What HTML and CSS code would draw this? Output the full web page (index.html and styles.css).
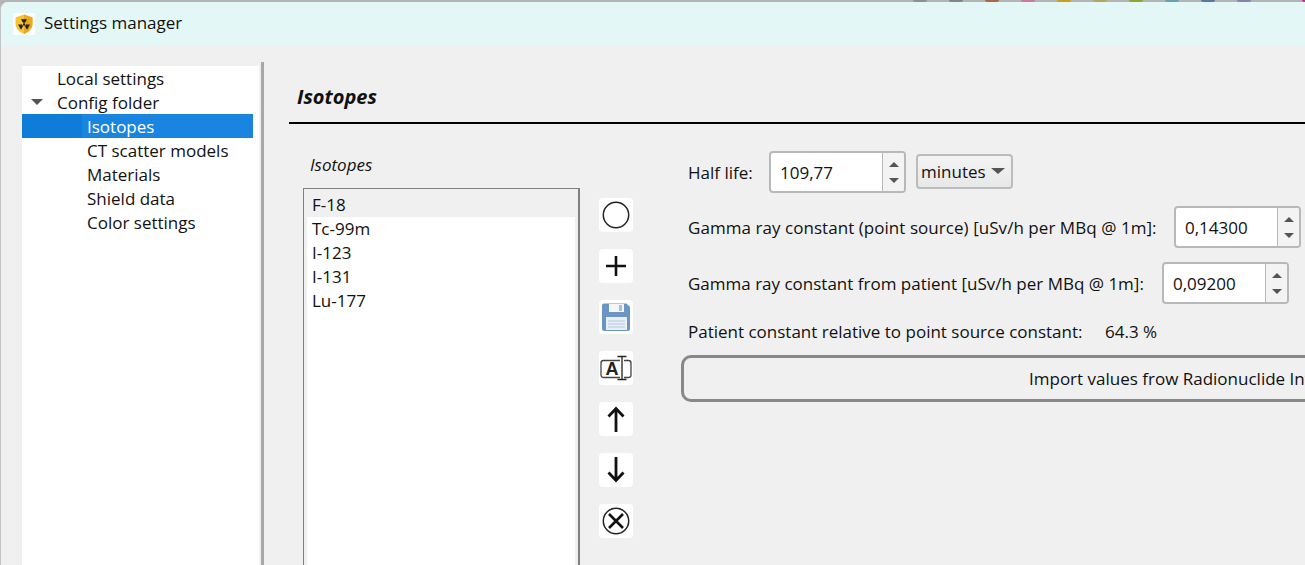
FILE: index.html
```html
<!DOCTYPE html>
<html>
<head>
  <title>Settings manager</title>
  <link rel="stylesheet" href="styles.css">
</head>
<body>
  <div class="desktop-strip">
    <span class="dot c1"></span><span class="dot c2"></span><span class="dot c3"></span><span class="dot c4"></span><span class="dot c5"></span><span class="dot c6"></span><span class="dot c7"></span><span class="dot c8"></span><span class="dot c9"></span><span class="dot c10"></span><span class="dot c11"></span>
  </div>
  <div class="window">
    <div class="titlebar">
      <span class="app-icon">
        <svg width="20" height="20" viewBox="0 0 20 20">
          <path d="M10 0.500 L18.500 3.500 V10 C18.500 14.500 14.500 18 10 20 C5.500 18 1.500 14.500 1.500 10 V3.500 Z" fill="#f7c435"/>
          <path d="M10 0.500 L18.500 3.500 V10 C18.500 14.500 14.500 18 10 20 Z" fill="#eaa925"/>
          <circle cx="10" cy="10.500" r="1.200" fill="#222"/>
          <path d="M9 8.770 L11 8.770 L13 5.300 L7 5.300 Z M8 10.500 L9 12.230 L7 15.700 L4 10.500 Z M12 10.500 L11 12.230 L13 15.700 L16 10.500 Z" fill="#222"/>
        </svg>
      </span>
      <span class="window-title">Settings manager</span>
    </div>

    <div class="content">
      <div class="tree-pane">
        <div class="tree">
          <div class="tree-row top-level">Local settings</div>
          <div class="tree-row top-level"><span class="tree-arrow"></span>Config folder</div>
          <div class="tree-row child selected"><span class="selected-text">Isotopes</span></div>
          <div class="tree-row child">CT scatter models</div>
          <div class="tree-row child">Materials</div>
          <div class="tree-row child">Shield data</div>
          <div class="tree-row child">Color settings</div>
        </div>
      </div>

      <div class="main">
        <h1 class="page-title">Isotopes</h1>

        <div class="columns">
          <div class="list-column">
            <div class="list-label">Isotopes</div>
            <div class="list">
              <div class="list-item current">F-18</div>
              <div class="list-rest">
                <div class="list-item">Tc-99m</div>
                <div class="list-item">I-123</div>
                <div class="list-item">I-131</div>
                <div class="list-item">Lu-177</div>
              </div>
            </div>
          </div>

          <div class="tools">
            <div class="tool">
              <svg width="28" height="28" viewBox="0 0 28 28"><circle cx="14" cy="14" r="12.700" fill="none" stroke="#222" stroke-width="1.500"/></svg>
            </div>
            <div class="tool">
              <svg width="28" height="28" viewBox="0 0 28 28"><path d="M14 4 V24 M4 14 H24" stroke="#111" stroke-width="2.600" fill="none"/></svg>
            </div>
            <div class="tool">
              <svg width="30" height="30" viewBox="0 0 30 30">
                <path d="M3 1.500 H25.500 L29 5 V26.500 Q29 29 26.500 29 H3.500 Q1 29 1 26.500 V3.500 Q1 1.500 3 1.500 Z" fill="#6b96c4"/>
                <rect x="8" y="2" width="15" height="8" fill="#f4f6f9"/>
                <rect x="18" y="3" width="3" height="6" fill="#a9c0da"/>
                <rect x="5" y="15" width="21" height="13" fill="#e9eff6"/>
                <path d="M7 19 H24 M7 22 H24 M7 25 H24" stroke="#b5c8de" stroke-width="1"/>
              </svg>
            </div>
            <div class="tool">
              <svg width="32" height="28" viewBox="0 0 32 28">
                <rect x="1" y="6.500" width="30" height="17" rx="2.500" fill="none" stroke="#444" stroke-width="1.300"/>
                <rect x="20" y="4" width="4" height="22" fill="#fff"/>
                <text x="12" y="21" class="icon-letter">A</text>
                <path d="M17.500 2.500 H26.500 M22 2.500 V25.500 M17.500 25.500 H26.500" stroke="#222" stroke-width="1.300" fill="none"/>
              </svg>
            </div>
            <div class="tool">
              <svg width="28" height="28" viewBox="0 0 28 28"><path d="M14 27 V3 M6.500 11.500 L14 3.500 L21.500 11.500" stroke="#111" stroke-width="2.800" fill="none"/></svg>
            </div>
            <div class="tool">
              <svg width="28" height="28" viewBox="0 0 28 28"><path d="M14 1 V25 M6.500 16.500 L14 24.500 L21.500 16.500" stroke="#111" stroke-width="2.800" fill="none"/></svg>
            </div>
            <div class="tool">
              <svg width="28" height="28" viewBox="0 0 28 28">
                <circle cx="14" cy="14" r="12.700" fill="none" stroke="#222" stroke-width="1.500"/>
                <path d="M7 7 L21 21 M21 7 L7 21" stroke="#111" stroke-width="2.600"/>
              </svg>
            </div>
          </div>

          <div class="form">
            <div class="form-row half-life-row">
              <label>Half life:</label>
              <div class="spin half-life-spin">
                <span class="spin-value">109,77</span>
                <span class="spin-arrows"><i class="up"></i><i class="down"></i></span>
              </div>
              <div class="combo">minutes<span class="combo-arrow"></span></div>
            </div>
            <div class="form-row gamma-row">
              <label>Gamma ray constant (point source) [uSv/h per MBq @ 1m]:</label>
              <div class="spin">
                <span class="spin-value">0,14300</span>
                <span class="spin-arrows"><i class="up"></i><i class="down"></i></span>
              </div>
            </div>
            <div class="form-row patient-row">
              <label>Gamma ray constant from patient [uSv/h per MBq @ 1m]:</label>
              <div class="spin">
                <span class="spin-value">0,09200</span>
                <span class="spin-arrows"><i class="up"></i><i class="down"></i></span>
              </div>
            </div>
            <div class="form-row relative-row">
              <label>Patient constant relative to point source constant:</label>
              <span class="relative-value">64.3 %</span>
            </div>
            <button class="import-button">Import values frow Radionuclide Information</button>
          </div>
        </div>
      </div>
    </div>
  </div>
</body>
</html>
```

FILE: styles.css
```css
html, body {
  margin: 0;
  height: 100%;
  overflow: hidden;
}

body {
  background-color: #b4b4b4;
  font-family: "Open Sans", "Noto Sans", sans-serif;
  font-size: 17px;
  color: #111;
}

.desktop-strip {
  height: 2px;
  display: flex;
  gap: 22px;
  padding-left: 913px;
  overflow: hidden;
}

.dot {
  width: 14px;
  height: 2px;
  flex: none;
  border-radius: 0 0 7px 7px;
}

.c1 { background-color: #8f8f8f; }
.c2 { background-color: #858585; }
.c3 { background-color: #a5694a; }
.c4 { background-color: #c77a9a; }
.c5 { background-color: #c8a020; }
.c6 { background-color: #b0a860; }
.c7 { background-color: #8aa830; }
.c8 { background-color: #6aa0b0; }
.c9 { background-color: #5a7aa0; }
.c10 { background-color: #8a80a8; }
.c11 { background-color: #c03090; width: 18px; margin-left: 29px; }

.window {
  height: 563px;
  width: 1305px;
  box-sizing: border-box;
  background-color: #f0f0f0;
  border-left: 1px solid #c4c4c4;
  border-top-left-radius: 8px;
  overflow: hidden;
  display: flex;
  flex-direction: column;
}

.titlebar {
  height: 43px;
  flex: none;
  background-color: #e3f8f6;
  display: flex;
  align-items: center;
  padding-left: 12px;
  box-sizing: border-box;
}

.app-icon {
  width: 22px;
  height: 22px;
  background-color: #fff;
  border-radius: 2px;
  display: flex;
  align-items: center;
  justify-content: center;
  margin-right: 9px;
}

.window-title {
  line-height: 22px;
  margin-top: -2px;
}

.content {
  flex: 1;
  display: flex;
  min-height: 0;
  padding: 17px 0 0 21px;
}

.tree-pane {
  flex: none;
  width: 237px;
  padding: 4px 2px 0 0;
  border-right: 3px solid #a8a8a8;
  margin-bottom: -40px;
}

.tree {
  height: 100%;
  background-color: #fff;
}

.tree-row {
  height: 24px;
  line-height: 26px;
  position: relative;
  width: 231px;
  box-sizing: border-box;
}

.top-level {
  padding-left: 35px;
}

.child {
  padding-left: 65px;
}

.selected {
  background-color: #0f7cd8;
  color: #fff;
  padding-left: 60px;
}

.selected-text {
  display: block;
  height: 24px;
  padding-left: 5px;
  background-color: #1a85e0;
}

.tree-arrow {
  position: absolute;
  left: 9px;
  top: 9px;
  border-left: 6px solid transparent;
  border-right: 6px solid transparent;
  border-top: 6px solid #555;
}

.main {
  flex: 1;
  min-width: 0;
  padding-left: 25px;
}

.page-title {
  margin: 4px 0 0;
  height: 36px;
  line-height: 22px;
  padding-left: 8px;
  padding-top: 20px;
  font-size: 20px;
  font-weight: bold;
  font-style: italic;
  border-bottom: 2px solid #000;
}

.columns {
  display: flex;
}

.list-column {
  margin-left: 14px;
  width: 277px;
  flex: none;
}

.list-label {
  font-style: italic;
  margin-left: 7px;
  height: 26px;
  margin-top: 29px;
  line-height: 24px;
  margin-bottom: 9px;
}

.list {
  height: 420px;
  box-sizing: content-box;
  background-color: #f0f0f0;
  border: 1px solid #808080;
  border-right-width: 2px;
  padding: 4px 3px;
  display: flex;
  flex-direction: column;
}

.list-rest {
  flex: 1;
  background-color: #fff;
}

.list-item {
  height: 24px;
  line-height: 24px;
  padding-left: 5px;
}

.tools {
  margin-left: 19px;
  padding-top: 74px;
  display: flex;
  flex-direction: column;
  gap: 17px;
  flex: none;
}

.tool {
  width: 34px;
  height: 34px;
  background-color: #fff;
  border-radius: 4px;
  display: flex;
  align-items: center;
  justify-content: center;
}

.icon-letter {
  font-family: "Liberation Sans", sans-serif;
  font-weight: bold;
  font-size: 18px;
  text-anchor: middle;
  fill: #222;
}

.form {
  margin-left: 55px;
  padding-top: 26px;
  flex: none;
  width: 700px;
}

.form-row {
  display: flex;
  align-items: center;
  white-space: nowrap;
}

.half-life-row {
  height: 44px;
}

.half-life-row label {
  width: 81px;
}

.gamma-row {
  margin-top: 11px;
  height: 44px;
}

.gamma-row label {
  width: 486px;
  letter-spacing: 0.05px;
}

.patient-row {
  margin-top: 12px;
  height: 44px;
}

.patient-row label {
  width: 474px;
}

.relative-row {
  margin-top: 14px;
  height: 24px;
}

.relative-row label {
  width: 417px;
}

.spin {
  width: 127px;
  height: 42px;
  box-sizing: border-box;
  background-color: #fff;
  border: 2px solid #b8b8b8;
  border-radius: 4px;
  display: flex;
  align-items: center;
}

.half-life-spin {
  width: 137px;
}

.spin-value {
  flex: 1;
  padding-left: 9px;
}

.spin-arrows {
  width: 21px;
  height: 100%;
  border-left: 1px solid #b8b8b8;
  background-color: #f3f3f3;
  display: flex;
  flex-direction: column;
  align-items: center;
  justify-content: center;
  gap: 11px;
  border-radius: 0 2px 2px 0;
}

.spin-arrows i {
  display: block;
  border-left: 5px solid transparent;
  border-right: 5px solid transparent;
}

.spin-arrows .up {
  border-bottom: 5px solid #555;
}

.spin-arrows .down {
  border-top: 5px solid #555;
}

.combo {
  margin-left: 10px;
  width: 97px;
  height: 35px;
  box-sizing: border-box;
  border: 2px solid #bcbcbc;
  border-radius: 4px;
  background: linear-gradient(#f3f3f3, #e8e8e8);
  padding-left: 3px;
  display: flex;
  align-items: center;
  margin-top: -2px;
}

.combo-arrow {
  margin-left: 5px;
  border-left: 7px solid transparent;
  border-right: 7px solid transparent;
  border-top: 6px solid #555;
}

.import-button {
  display: block;
  margin-left: -7px;
  margin-top: 12px;
  width: 1000px;
  height: 47px;
  padding: 0 0 0 345px;
  text-align: left;
  white-space: nowrap;
  border: 3px solid #888;
  border-radius: 10px;
  background-color: #f0f0f0;
  font-family: inherit;
  font-size: 17px;
  color: #111;
}
```
